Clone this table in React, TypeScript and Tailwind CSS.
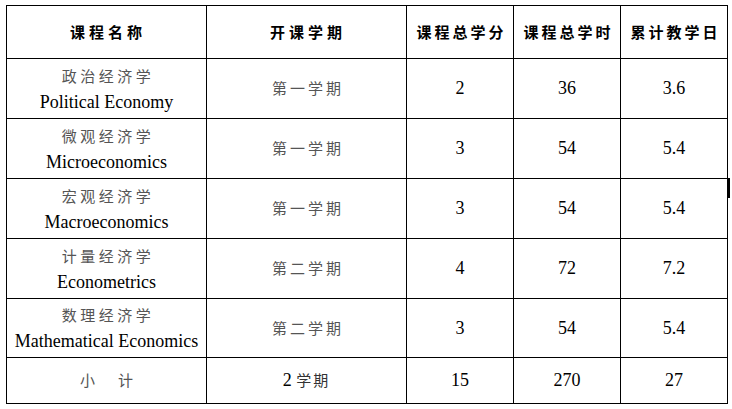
import React from "react";

const serif = "font-['Liberation_Serif','Noto_Sans_CJK_SC',serif]";
const cjk = "font-['Noto_Sans_CJK_SC',sans-serif]";

type Row = { zh: string; en: string; term: string; credit: string; hours: string; days: string };

const rows: Row[] = [
  { zh: "政治经济学", en: "Political Economy", term: "第一学期", credit: "2", hours: "36", days: "3.6" },
  { zh: "微观经济学", en: "Microeconomics", term: "第一学期", credit: "3", hours: "54", days: "5.4" },
  { zh: "宏观经济学", en: "Macroeconomics", term: "第一学期", credit: "3", hours: "54", days: "5.4" },
  { zh: "计量经济学", en: "Econometrics", term: "第二学期", credit: "4", hours: "72", days: "7.2" },
  { zh: "数理经济学", en: "Mathematical Economics", term: "第二学期", credit: "3", hours: "54", days: "5.4" },
];

const headers = ["课程名称", "开课学期", "课程总学分", "课程总学时", "累计教学日"];

const cell = "border-r border-b border-black flex flex-col items-center justify-center";

export default function App() {
  return (
    <div className="w-[732px] h-[409px] bg-white pt-[5px] pl-[6px]">
      <div className="relative w-[722px]">
        <div className="grid grid-cols-[200px_200px_107px_107px_107px] border-l border-t border-black">
          {headers.map((h, i) => (
            <div key={h} className={`${cell} h-[53px]`}>
              <span
                className={`${cjk} font-bold text-[15px] text-black tracking-[3px] ${i < 2 ? "tracking-[4px]" : ""} pl-[3px]`}
              >
                {h}
              </span>
            </div>
          ))}
          {rows.map((r, idx) => (
            <React.Fragment key={r.en}>
              <div className={`${cell} ${idx === 4 ? "h-[59px]" : "h-[60px]"}`}>
                <span className={`${cjk} text-[15px] leading-[26px] text-[#555] tracking-[3.5px] pl-[3px]`}>{r.zh}</span>
                <span className={`${serif} text-[18px] leading-[26px] text-black`}>{r.en}</span>
              </div>
              <div className={`${cell} ${idx === 4 ? "h-[59px]" : "h-[60px]"}`}>
                <span className={`${cjk} text-[15px] text-[#555] tracking-[3px] pl-[3px]`}>{r.term}</span>
              </div>
              <div className={`${cell} ${idx === 4 ? "h-[59px]" : "h-[60px]"}`}>
                <span className={`${serif} text-[18px] text-black`}>{r.credit}</span>
              </div>
              <div className={`${cell} ${idx === 4 ? "h-[59px]" : "h-[60px]"}`}>
                <span className={`${serif} text-[18px] text-black`}>{r.hours}</span>
              </div>
              <div className={`${cell} ${idx === 4 ? "h-[59px]" : "h-[60px]"}`}>
                <span className={`${serif} text-[18px] text-black`}>{r.days}</span>
              </div>
            </React.Fragment>
          ))}
          <div className={`${cell} h-[46px]`}>
            <span className={`${cjk} text-[15px] text-[#555] tracking-[4px] pl-[4px]`}>小　计</span>
          </div>
          <div className={`${cell} h-[46px]`}>
            <span className="text-black">
              <span className={`${serif} text-[18px]`}>2 </span>
              <span className={`${cjk} text-[15px] text-[#333] tracking-[2px]`}>学期</span>
            </span>
          </div>
          <div className={`${cell} h-[46px]`}>
            <span className={`${serif} text-[18px] text-black`}>15</span>
          </div>
          <div className={`${cell} h-[46px]`}>
            <span className={`${serif} text-[18px] text-black`}>270</span>
          </div>
          <div className={`${cell} h-[46px]`}>
            <span className={`${serif} text-[18px] text-black`}>27</span>
          </div>
        </div>
        <div className="absolute left-[721px] top-[173px] w-[3px] h-[20px] bg-black" />
      </div>
    </div>
  );
}
